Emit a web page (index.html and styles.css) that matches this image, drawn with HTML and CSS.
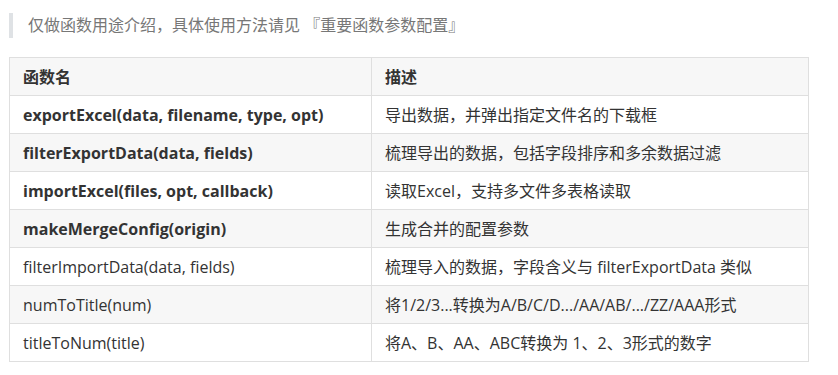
FILE: index.html
```html
<!doctype html>
<html lang="zh-CN">
<head>
    <meta charset="UTF-8">
    <title>函数说明</title>
    <link rel="stylesheet" href="styles.css">
</head>
<body>
    <div class="doc">
        <blockquote class="tip">仅做函数用途介绍，具体使用方法请见 『重要函数参数配置』</blockquote>
        <table class="fn-table">
            <colgroup>
                <col class="col-name">
                <col class="col-desc">
            </colgroup>
            <thead>
                <tr><th>函数名</th><th>描述</th></tr>
            </thead>
            <tbody>
                <tr><td><strong>exportExcel(data, filename, type, opt)</strong></td><td>导出数据，并弹出指定文件名的下载框</td></tr>
                <tr><td><strong>filterExportData(data, fields)</strong></td><td>梳理导出的数据，包括字段排序和多余数据过滤</td></tr>
                <tr><td><strong>importExcel(files, opt, callback)</strong></td><td>读取Excel，支持多文件多表格读取</td></tr>
                <tr><td><strong>makeMergeConfig(origin)</strong></td><td>生成合并的配置参数</td></tr>
                <tr><td>filterImportData(data, fields)</td><td>梳理导入的数据，字段含义与 filterExportData 类似</td></tr>
                <tr><td>numToTitle(num)</td><td>将1/2/3...转换为A/B/C/D.../AA/AB/.../ZZ/AAA形式</td></tr>
                <tr><td>titleToNum(title)</td><td>将A、B、AA、ABC转换为 1、2、3形式的数字</td></tr>
            </tbody>
        </table>
    </div>
</body>
</html>
```

FILE: styles.css
```css
*{
    margin: 0;
    padding: 0;
    box-sizing: border-box;
}
html,body{
    background: #fff;
}
body{
    font: 16px/24px "Open Sans", "Noto Sans CJK SC", sans-serif;
    color: #333;
}
.doc{
    padding: 13px 9px 0;
}
.tip{
    border-left: 4px solid #dfe2e5;
    padding-left: 15px;
    height: 25px;
    line-height: 25px;
    color: #777;
}
.fn-table{
    margin-top: 19px;
    width: 799px;
    border-collapse: collapse;
    table-layout: fixed;
}
.col-name{
    width: 362px;
}
.col-desc{
    width: 437px;
}
.fn-table th,
.fn-table td{
    border: 1px solid #dfdfdf;
    padding: 0 13px;
    height: 38px;
    text-align: left;
    white-space: nowrap;
}
.fn-table th{
    font-weight: 700;
}
.fn-table strong{
    font-weight: 700;
}
.fn-table thead tr,
.fn-table tbody tr:nth-child(2n){
    background: #f7f7f7;
}
```
